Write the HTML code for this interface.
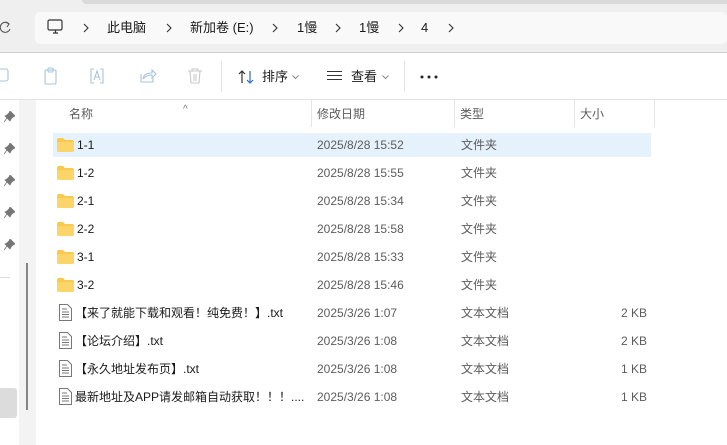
<!DOCTYPE html><html><head><meta charset="utf-8"><style>
*{margin:0;padding:0;box-sizing:border-box}
body{width:727px;height:445px;overflow:hidden;background:#fff;font-family:"Liberation Sans","Noto Sans CJK SC",sans-serif;position:relative;color:#1a1a1a}
.a{position:absolute}
.t{font-size:12px;white-space:nowrap;line-height:14px}
.g{color:#5c5c5c}
.c{position:absolute;top:23px}
</style></head><body>
<div class="a" style="left:0;top:0;width:727px;height:52px;background:#efefef"></div>
<div class="a" style="left:82px;top:0;width:645px;height:4px;background:#dadada;border-radius:0 0 0 6px"></div>
<div class="a" style="left:35px;top:12px;width:692px;height:32px;background:#f9f9f9;border-radius:5px"></div>
<div class="a" style="left:0;top:52px;width:727px;height:1px;background:#d2d2d2"></div>
<div class="a" style="left:0;top:99px;width:727px;height:1px;background:#e3e3e3"></div>
<svg class="a" style="left:0;top:20px" width="12" height="16"><path d="M9 4 A5 5 0 1 0 10 9" fill="none" stroke="#555" stroke-width="1.1"/><path d="M6 2 L9 4 L7 7" fill="none" stroke="#555" stroke-width="1.1"/></svg>
<svg class="a" style="left:47px;top:19px" width="18" height="16"><rect x="1" y="1" width="14" height="10" rx="1.5" fill="none" stroke="#333" stroke-width="1.2"/><path d="M6 14h5M8.5 11v3" stroke="#333" stroke-width="1.2"/></svg>
<svg class="c" style="left:83px" width="6" height="10" fill="none" stroke="#333" stroke-width="1.1"><path d="M1 1l4 4-4 4"/></svg>
<div class="a t" style="top:21px;left:107px;font-size:13px">此电脑</div>
<svg class="c" style="left:166px" width="6" height="10" fill="none" stroke="#333" stroke-width="1.1"><path d="M1 1l4 4-4 4"/></svg>
<div class="a t" style="top:21px;left:190px;font-size:13px">新加卷 (E:)</div>
<svg class="c" style="left:272px" width="6" height="10" fill="none" stroke="#333" stroke-width="1.1"><path d="M1 1l4 4-4 4"/></svg>
<div class="a t" style="top:21px;left:297px;font-size:13px">1慢</div>
<svg class="c" style="left:335px" width="6" height="10" fill="none" stroke="#333" stroke-width="1.1"><path d="M1 1l4 4-4 4"/></svg>
<div class="a t" style="top:21px;left:359px;font-size:13px">1慢</div>
<svg class="c" style="left:398px" width="6" height="10" fill="none" stroke="#333" stroke-width="1.1"><path d="M1 1l4 4-4 4"/></svg>
<div class="a t" style="top:21px;left:421px;font-size:13px">4</div>
<svg class="c" style="left:448px" width="6" height="10" fill="none" stroke="#333" stroke-width="1.1"><path d="M1 1l4 4-4 4"/></svg>
<svg class="a" style="left:0;top:66px" width="220" height="22" fill="none" stroke="#a9c4dc" stroke-width="1.1">
<rect x="-4" y="3" width="12" height="12" rx="2"/>
<rect x="45" y="4" width="11" height="14" rx="1.5"/><rect x="48" y="2" width="5" height="4" rx="1"/>
<path d="M94 3h-3v14h3M100 3h3v14h-3"/><path d="M94 14l3-9 3 9M95 11h4"/>
<path d="M141 8v8h12v-4"/><path d="M143 13c1-5 4-6 9-6v-3l4 4-4 4v-3c-4 0-6 1-9 4"/>
<path d="M188 5h14M192 5v-2h6v2M190 5l1 12h8l1-12M194 8v7M196 8v7" stroke="#c9c9c9"/>
</svg>
<div class="a" style="left:221px;top:61px;width:1px;height:31px;background:#e3e3e3"></div>
<div class="a" style="left:404px;top:61px;width:1px;height:31px;background:#e3e3e3"></div>
<svg class="a" style="left:238px;top:69px" width="18" height="16" fill="none" stroke-width="1.2"><path d="M4 14V2M1 5l3-3 3 3" stroke="#333"/><path d="M12 2v12M9 11l3 3 3-3" stroke="#2a6cc4"/></svg>
<div class="a t" style="top:70px;left:262px;font-size:13px">排序</div>
<svg class="a" style="left:292px;top:75px" width="7" height="5" fill="none" stroke="#888"><path d="M.5.5l3 3 3-3"/></svg>
<svg class="a" style="left:327px;top:70px" width="16" height="12" stroke="#333" stroke-width="1"><path d="M0 1.5h15M0 5.5h15M0 9.5h15"/></svg>
<div class="a t" style="top:70px;left:351px;font-size:13px">查看</div>
<svg class="a" style="left:382px;top:75px" width="7" height="5" fill="none" stroke="#888"><path d="M.5.5l3 3 3-3"/></svg>
<svg class="a" style="left:420px;top:75px" width="20" height="4" fill="#222"><circle cx="2" cy="2" r="1.5"/><circle cx="9" cy="2" r="1.5"/><circle cx="16" cy="2" r="1.5"/></svg>
<div class="a" style="left:19px;top:100px;width:17px;height:345px;background:#f3f3f3"></div>
<div class="a" style="left:26px;top:263px;width:2px;height:147px;background:#858585"></div>
<div class="a" style="left:0;top:388px;width:17px;height:30px;background:#dcdcdc;border-radius:0 3px 3px 0"></div>
<div class="a" style="left:0;top:277px;width:10px;height:1px;background:#ddd"></div>
<div id="pins"></div>
<div class="a t" style="top:103px;left:183px;font-size:10px;color:#777">^</div>
<div class="a t g" style="top:107px;left:69px">名称</div>
<div class="a t g" style="top:107px;left:317px">修改日期</div>
<div class="a t g" style="top:107px;left:460px">类型</div>
<div class="a t g" style="top:107px;left:580px">大小</div>
<div class="a" style="left:311px;top:100px;width:1px;height:27px;background:#e5e5e5"></div>
<div class="a" style="left:454px;top:100px;width:1px;height:27px;background:#e5e5e5"></div>
<div class="a" style="left:574px;top:100px;width:1px;height:27px;background:#e5e5e5"></div>
<div class="a" style="left:654px;top:100px;width:1px;height:27px;background:#e5e5e5"></div>
<div class="a" style="left:53px;top:133px;width:598px;height:24px;background:#e5f1fb"></div>
<div id="rows"></div>
<script>
var p="";[116,148,180,212,244].forEach(function(y){p+='<svg class="a" style="left:4px;top:'+(y-5)+'px" width="11" height="11"><path d="M6 0l5 5-2 1-2 2-1 2-5-5 2-1 2-2z M3 7l-3 4" fill="#777" stroke="#777" stroke-width=".8"/></svg>';});
document.getElementById("pins").innerHTML=p;
var r=[["1-1","2025/8/28 15:52","文件夹",""],["1-2","2025/8/28 15:55","文件夹",""],["2-1","2025/8/28 15:34","文件夹",""],["2-2","2025/8/28 15:58","文件夹",""],["3-1","2025/8/28 15:33","文件夹",""],["3-2","2025/8/28 15:46","文件夹",""],["【来了就能下载和观看！纯免费！】.txt","2025/3/26 1:07","文本文档","2 KB"],["【论坛介绍】.txt","2025/3/26 1:08","文本文档","2 KB"],["【永久地址发布页】.txt","2025/3/26 1:08","文本文档","1 KB"],["最新地址及APP请发邮箱自动获取！！！....","2025/3/26 1:08","文本文档","1 KB"]];
var h="";r.forEach(function(x,i){var y=138+i*28;var f=i<6;
h+=f?'<svg class="a" style="left:57px;top:'+(y)+'px" width="17" height="14"><path d="M0 2q0-2 2-2h4l2 2h7q2 0 2 2v8q0 2-2 2H2q-2 0-2-2z" fill="#f8c94a"/><path d="M0 4h17v8q0 2-2 2H2q-2 0-2-2z" fill="#fbd56a"/></svg>':'<svg class="a" style="left:59px;top:'+(y-2)+'px" width="13" height="17" fill="none" stroke="#777" stroke-width="1"><path d="M.5.5h8l4 4v12H.5z"/><path d="M3 5h5M3 8h7M3 10.5h7M3 13h7"/></svg>';
h+='<div class="a t" style="top:'+y+'px;left:'+(f?77:75)+'px">'+x[0]+'</div><div class="a t g" style="top:'+y+'px;left:317px">'+x[1]+'</div><div class="a t g" style="top:'+y+'px;left:461px">'+x[2]+'</div><div class="a t g" style="top:'+y+'px;left:580px;width:67px;text-align:right">'+x[3]+'</div>';});
document.getElementById("rows").innerHTML=h;
</script>
</body></html>
